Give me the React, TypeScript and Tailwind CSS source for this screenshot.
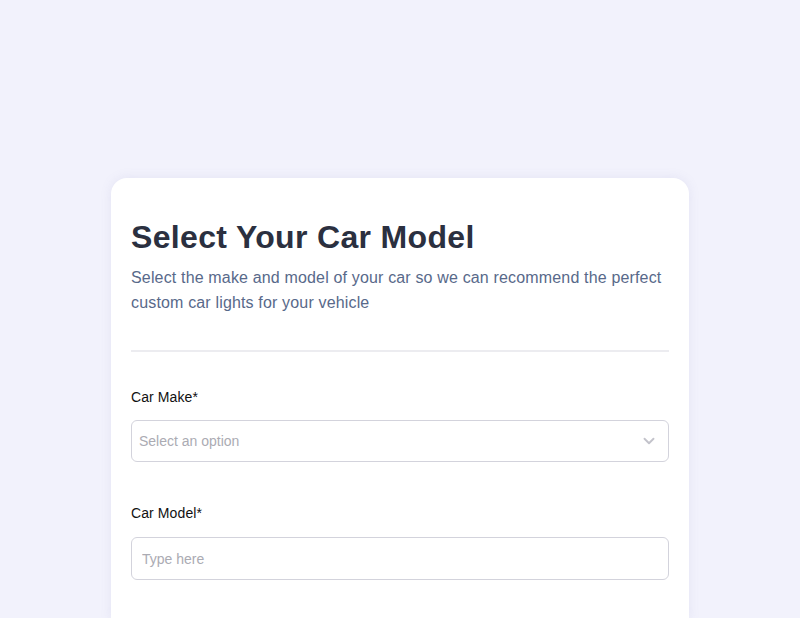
import { ChevronDown } from "lucide-react";

export default function App() {
  return (
    <div className="min-h-[618px] bg-[#f2f2fc] px-[111px] pt-[178px] font-['Liberation_Sans',Arial,sans-serif]">
      <div className="mx-auto max-w-[578px] rounded-t-2xl bg-white px-5 pb-10 pt-[39px] shadow-[0_0_12px_rgba(120,120,180,0.12)]">
        <h1 className="text-[32px] font-bold leading-10 tracking-[0.33px] text-[#2b3040]">
          Select Your Car Model
        </h1>
        <p className="mt-[8px] text-base leading-[25px] tracking-[0.16px] text-[#58698a]">
          Select the make and model of your car so we can recommend the perfect
          custom car lights for your vehicle
        </p>
        <div className="mt-[35px] h-[2px] bg-[#ececf0]" />

        <label className="mt-[35px] block text-sm leading-5 tracking-[0.1px] text-[#111]">
          Car Make*
        </label>
        <div className="mt-[13px] flex h-[42px] items-center justify-between rounded-md border border-[#d3d3dc] pl-[7px] pr-[10px]">
          <span className="text-sm text-[#ababb3]">Select an option</span>
          <ChevronDown className="h-[18px] w-[18px] text-[#c3c3cb]" strokeWidth={2.5} />
        </div>

        <label className="mt-[41px] block text-sm leading-5 tracking-[0.1px] text-[#111]">
          Car Model*
        </label>
        <input
          type="text"
          placeholder="Type here"
          className="mt-[14px] block h-[43px] w-full rounded-md border border-[#d3d3dc] px-[10px] text-sm outline-none placeholder:text-[#ababb3]"
        />
      </div>
    </div>
  );
}
